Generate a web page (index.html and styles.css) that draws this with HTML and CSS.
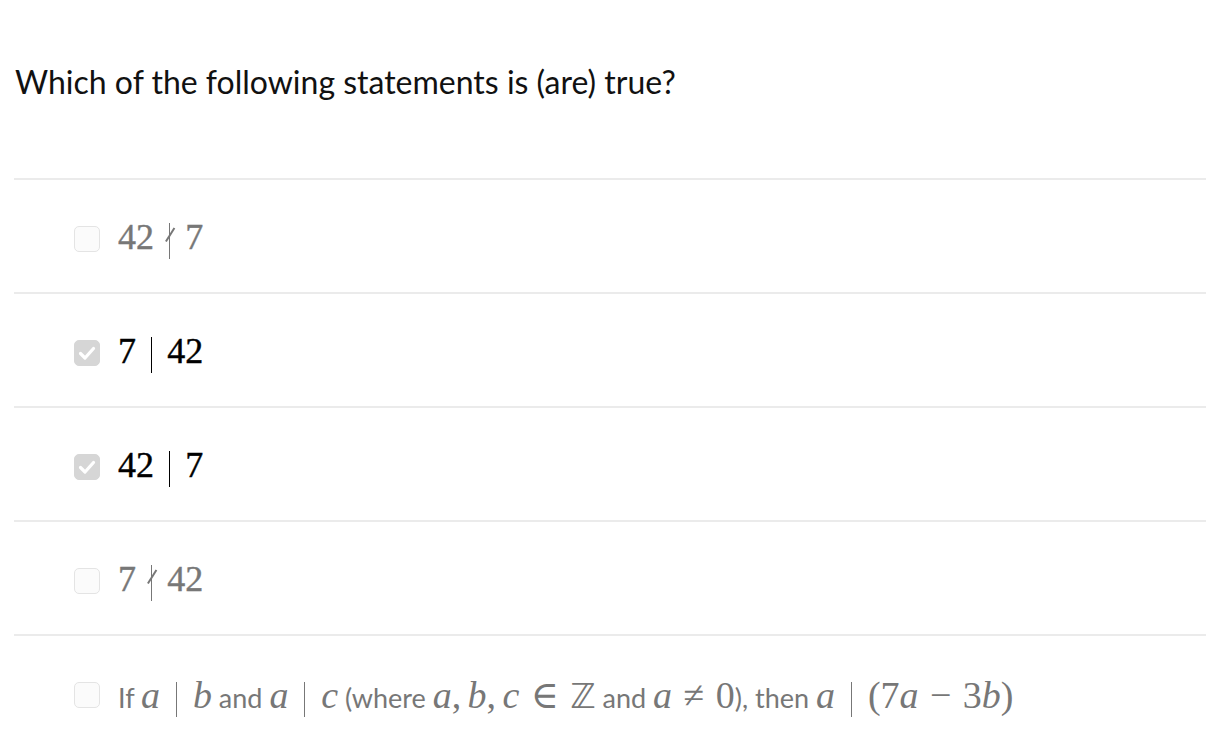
FILE: index.html
```html
<!DOCTYPE html>
<html lang="en">
<head>
<meta charset="utf-8">
<title>Question</title>
<link rel="stylesheet" href="styles.css">
</head>
<body>
<div class="page">
  <h1 class="question">Which of the following statements is (are) true?</h1>
  <ul class="options">
    <li class="option">
      <span class="box"></span>
      <span class="math">42<span class="rel bar nd"></span>7</span>
    </li>
    <li class="option selected">
      <span class="box"><svg viewBox="0 0 26 26" width="26" height="26"><path d="M6.5 13.5 L11 18 L19.5 8.5" fill="none" stroke="#fff" stroke-width="3.2" stroke-linecap="round" stroke-linejoin="round"/></svg></span>
      <span class="math">7<span class="rel bar"></span>42</span>
    </li>
    <li class="option selected">
      <span class="box"><svg viewBox="0 0 26 26" width="26" height="26"><path d="M6.5 13.5 L11 18 L19.5 8.5" fill="none" stroke="#fff" stroke-width="3.2" stroke-linecap="round" stroke-linejoin="round"/></svg></span>
      <span class="math">42<span class="rel bar"></span>7</span>
    </li>
    <li class="option">
      <span class="box"></span>
      <span class="math">7<span class="rel bar nd"></span>42</span>
    </li>
    <li class="option last">
      <span class="box"></span>
      <span class="text">If <span class="m"><i>a</i><span class="rel bar"></span><i>b</i></span> and <span class="m"><i>a</i><span class="rel bar"></span><i>c</i></span> (where <span class="m"><i>a</i>,<span class="sp"></span><i>b</i>,<span class="sp"></span><i>c</i><span class="rel op">∈</span><span class="bb">ℤ</span></span> and <span class="m"><i>a</i><span class="rel op">≠</span>0</span>), then <span class="m"><i>a</i><span class="rel bar"></span>(7<i>a</i><span class="bin">−</span>3<i>b</i>)</span></span>
    </li>
  </ul>
</div>
</body>
</html>
```

FILE: styles.css
```css
* { box-sizing: border-box; }
html, body { margin: 0; padding: 0; background: #fff; }
body { font-family: Lato, "Noto Sans", sans-serif; color: #000; }

.page {
  padding: 0 12px 0 14px;
}

.question {
  margin: 0;
  padding: 62px 0 0 1px;
  height: 178px;
  font-size: 32px;
  font-weight: 400;
  line-height: 40px;
  color: #111;
}

.options {
  list-style: none;
  margin: 0;
  padding: 0;
}

.option {
  border-top: 2px solid #ebebeb;
  height: 114px;
  display: flex;
  align-items: center;
  padding: 6px 0 0 60px;
  color: #777;
}

.option.selected { color: #000; }

.option.last { height: 120px; padding-top: 0; }

.box {
  flex: none;
  width: 26px;
  height: 26px;
  border: 1.5px solid #e4e4e4;
  border-radius: 5px;
  background: #fbfbfb;
  margin-right: 18px;
  display: flex;
  align-items: center;
  justify-content: center;
}
.box svg { display: block; margin: -1.5px; }

.selected .box {
  background: #d6d6d6;
  border-color: #d6d6d6;
}

.math {
  font-family: "Liberation Serif", "DejaVu Serif", serif;
  font-size: 36px;
  line-height: 1;
  white-space: nowrap;
  -webkit-text-stroke: 0.4px currentColor;
}

.rel { display: inline-block; margin: 0 0.42em; }
.rel.op { margin: 0 0.3em; }

.bar {
  width: 0;
  height: 1em;
  border-left: 1.6px solid currentColor;
  vertical-align: -0.27em;
  position: relative;
  -webkit-text-stroke: 0;
}

.nd::after {
  content: "";
  position: absolute;
  left: -0.22em;
  top: 0.32em;
  width: 0.44em;
  height: 1.5px;
  background: currentColor;
  transform: rotate(-58deg);
}

.text {
  font-size: 27px;
  white-space: nowrap;
}

.m {
  font-family: "Liberation Serif", "DejaVu Serif", serif;
  font-size: 38px;
}
.m i { font-style: italic; }
.m .bar { height: 0.93em; vertical-align: -0.24em; border-left-width: 1.4px; }
.sp { display: inline-block; width: 0.1667em; }
.bin { display: inline-block; margin: 0 0.3em; }
.bb { font-family: "DejaVu Sans", sans-serif; font-size: 0.9em; }
```
